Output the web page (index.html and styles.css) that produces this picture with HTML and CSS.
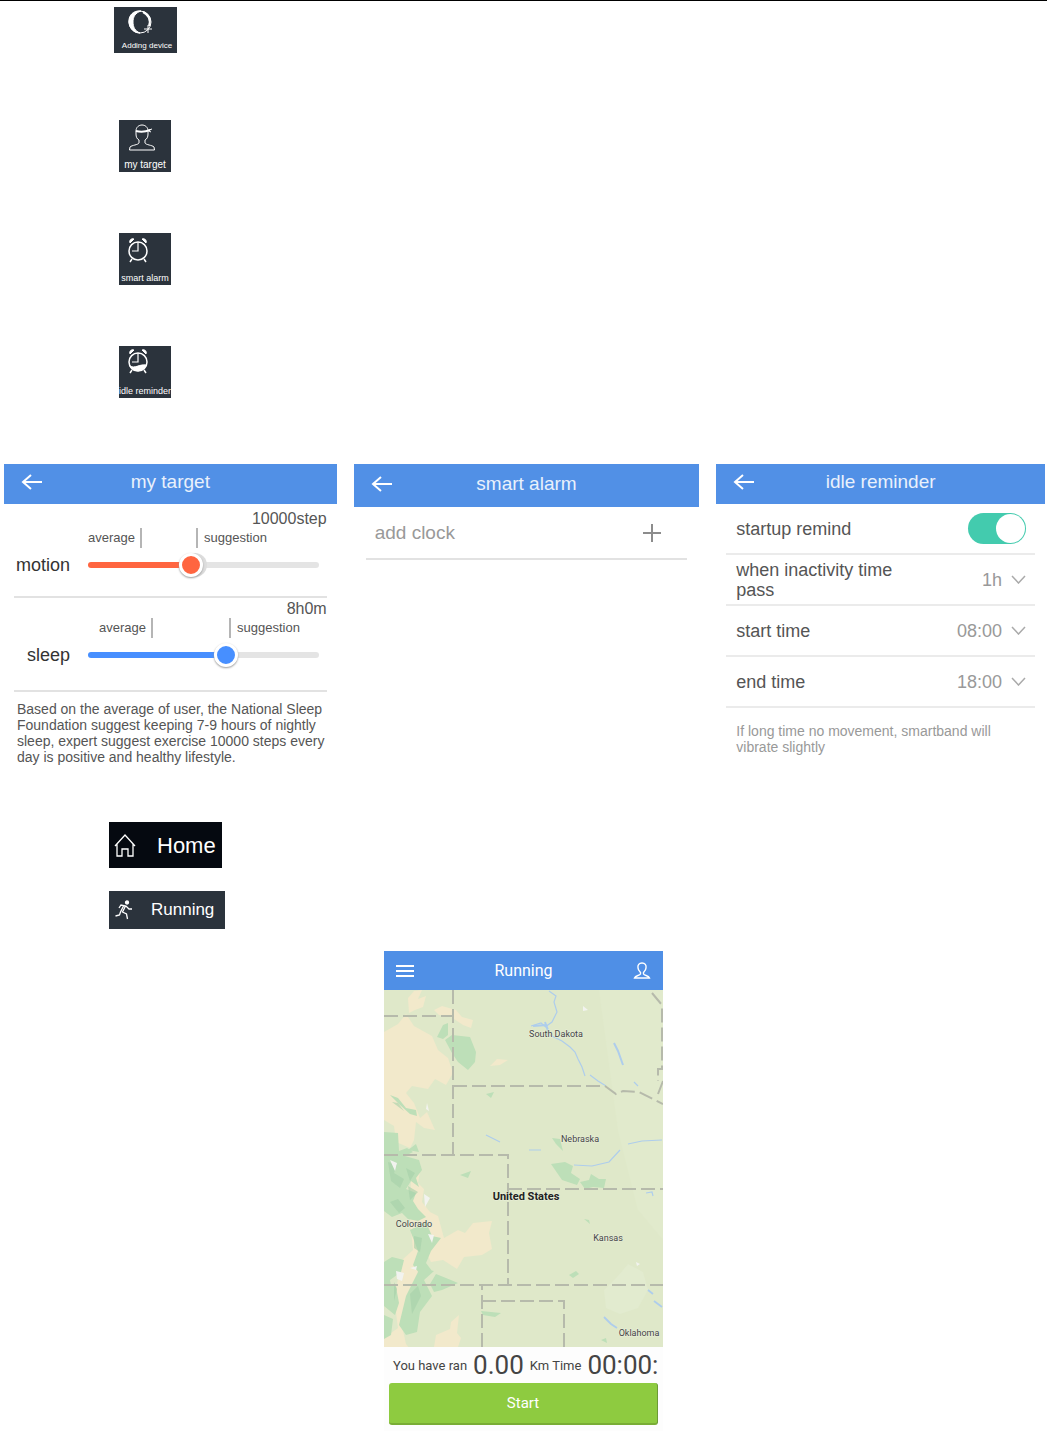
FILE: index.html
```
<!DOCTYPE html>
<html lang="en">
<head>
  <meta charset="UTF-8" />
  <meta name="viewport" content="width=device-width, initial-scale=1.0" />
  <title>Smartband App Guide</title>
  <link rel="stylesheet" href="styles.css">
</head>
<body>
  <main class="page">
    <div class="tiles">
      <button type="button" class="tile tile-wide">
        <svg width="28" height="27" viewBox="0 0 28 27" fill="none" stroke="#fff">
          <circle cx="14" cy="12" r="11" stroke-width="1" />
          <path d="M15 1C7 0 2 6 3 13c1 6 5 10 11 10-5-2-7-6-7-11S9 3 15 1z" fill="#fff" />
          <path d="M17 2c6 3 8 8 6 14" stroke-width="2" />
          <path d="M22 15v8M18 19h8" />
        </svg>
        <span>Adding device</span>
      </button>
      <button type="button" class="tile">
        <svg width="28" height="28" viewBox="0 0 28 28" fill="none" stroke="#fff">
          <path d="M8 8c0-8 12-8 12 0v3c0 3-1 5-3 6v3c1 2 7 2 9 4l.5 3h-25l.5-3c2-2 8-2 9-4v-3c-2-1-3-3-3-6z" />
          <path d="M8 8c4 1 9 1 14-1" stroke-width="2" />
          <path d="M21 7l3-1M21 8l2 1" />
        </svg>
        <span>my target</span>
      </button>
      <button type="button" class="tile tile-small">
        <svg width="24" height="28" viewBox="0 0 24 28" fill="none" stroke="#fff">
          <circle cx="12" cy="15" r="9" stroke-width="1.500" />
          <path d="M12 6v9H6" stroke-width="1.200" />
          <path d="M6 23l-2 3M18 23l2 3" stroke-width="1.500" />
          <path d="M4 7a3 3 0 0 1 4-4zM20 7a3 3 0 0 0-4-4z" fill="#fff" />
        </svg>
        <span>smart alarm</span>
      </button>
      <button type="button" class="tile tile-small">
        <svg width="24" height="26" viewBox="0 0 24 26" fill="none" stroke="#fff">
          <circle cx="12" cy="13" r="9" stroke-width="1.500" />
          <path d="M12 4v9H6" stroke-width="1.200" />
          <path d="M4 17c5 3 9-2 16-1-2 7-13 8-16 1z" fill="#fff" />
          <path d="M6 21l-2 3M18 21l2 3" stroke-width="1.500" />
          <path d="M4 5a3 3 0 0 1 4-4zM20 5a3 3 0 0 0-4-4z" fill="#fff" />
        </svg>
        <span>idle reminder</span>
      </button>
    </div>

    <div class="panels">
      <section class="panel">
        <header class="bar">
          <button type="button" class="back" aria-label="Back">
            <svg width="22" height="18" viewBox="0 0 22 18" fill="none" stroke="#fff" stroke-width="2"><path d="M21 9H2M10 2L2 9l8 7" /></svg>
          </button>
          <h2>my target</h2>
        </header>
        <div class="target">
          <output class="value" for="motion">10000step</output>
          <label for="motion">motion</label>
          <div class="marks">
            <span class="mark">average</span>
            <span class="mark mark-right">suggestion</span>
          </div>
          <input type="range" id="motion" class="slider slider-motion" min="0" max="100" value="44">
        </div>
        <div class="target">
          <output class="value" for="sleep">8h0m</output>
          <label for="sleep">sleep</label>
          <div class="marks marks-sleep">
            <span class="mark">average</span>
            <span class="mark mark-right">suggestion</span>
          </div>
          <input type="range" id="sleep" class="slider slider-sleep" min="0" max="100" value="61">
        </div>
        <p class="advice">Based on the average of user, the National Sleep Foundation suggest keeping 7-9 hours of nightly sleep, expert suggest exercise 10000 steps every day is positive and healthy lifestyle.</p>
      </section>

      <section class="panel">
        <header class="bar bar-tall">
          <button type="button" class="back" aria-label="Back">
            <svg width="22" height="18" viewBox="0 0 22 18" fill="none" stroke="#fff" stroke-width="2"><path d="M21 9H2M10 2L2 9l8 7" /></svg>
          </button>
          <h2>smart alarm</h2>
        </header>
        <button type="button" class="add-clock">
          add clock
          <svg width="20" height="20" viewBox="0 0 20 20" stroke="#8c8c8c" stroke-width="2"><path d="M10 1v18M1 10h18" /></svg>
        </button>
      </section>

      <section class="panel">
        <header class="bar">
          <button type="button" class="back" aria-label="Back">
            <svg width="22" height="18" viewBox="0 0 22 18" fill="none" stroke="#fff" stroke-width="2"><path d="M21 9H2M10 2L2 9l8 7" /></svg>
          </button>
          <h2>idle reminder</h2>
        </header>
        <div class="rows">
          <div class="row">
            <label for="remind">startup remind</label>
            <input type="checkbox" id="remind" class="switch" checked>
          </div>
          <div class="row">
            <label for="idle">when inactivity time pass</label>
            <select id="idle"><option>1h</option></select>
          </div>
          <div class="row">
            <label for="start">start time</label>
            <select id="start"><option>08:00</option></select>
          </div>
          <div class="row">
            <label for="end">end time</label>
            <select id="end"><option>18:00</option></select>
          </div>
        </div>
        <p class="note">If long time no movement, smartband will vibrate slightly</p>
      </section>
    </div>

    <nav class="menu">
      <a href="#home" class="menu-home">
        <svg width="22" height="24" viewBox="0 0 22 24" fill="none" stroke="#fff" stroke-width="1.300"><path d="M1 12L11 1l10 11M3 10v12h5v-7h6v7h5V10" /></svg>
        Home
      </a>
      <a href="#running" class="menu-running">
        <svg width="18" height="20" viewBox="0 0 18 20" fill="none" stroke="#fff" stroke-width="1.300">
          <circle cx="12" cy="2.500" r="1.500" fill="#fff" />
          <path d="M4 8l2-3 5 1 3 3h3M10.500 6l-3 6 4 2 1 5M8.500 6l-3 6-1 3-4 1" />
        </svg>
        Running
      </a>
    </nav>

    <section class="running" id="running">
      <header class="running-bar">
        <button type="button" aria-label="Menu">
          <svg width="18" height="14" viewBox="0 0 18 14" stroke="#fff" stroke-width="2"><path d="M0 2h18M0 7h18M0 12h18" /></svg>
        </button>
        <h2>Running</h2>
        <button type="button" aria-label="Profile">
          <svg width="18" height="18" viewBox="0 0 18 18" fill="none" stroke="#fff" stroke-width="1.400"><path d="M9 1C6 1 4.500 3 5 6c0 2 1 3 2.500 4.500V12c-1 2-5 1-6 4h15c-1-3-5-2-6-4v-1.500C12 9 13 8 13 6c.5-3-1-5-4-5z" /></svg>
        </button>
      </header>

      <svg class="map" viewBox="0 0 279 357">
        <rect width="279" height="357" fill="#dfe8c9" />
        <path fill="#e1eacc" d="M215 0h64v250l-25-30-20-80z" />

        <!-- dry land -->
        <g fill="#f2e9cb">
          <path d="M0 42l14-8 8-10 8 12 18 10 6 14 10 8 5 15-7 12-11-6-7 10-16-3-6 7 8 10 6 15 7-6 8 18-11-2-8-6-2 18-4 8-14-6-2-16-10-6z" />
          <path d="M24 8l6-7 8-1-4 9 8-3-3 11-8 3-6 3zM50 20l8-4 14 4 6 7 11 3-2 8-8-3-12-8-12-2zM106 76l7-7 11 1-8 5z" />
          <path d="M28 178l8 3-2 12 6 6-2 13 8 10 8 4 6 22 14-8 7 3 8-10 19-2-3 12 3 16-10 6-18 2-7 12-14-9-12 2-7-14-4 18-9 30-9 30 4 18 10 12H0v-18l14-10-4-30 8-38 11-10-4-40z" />
          <path d="M52 345l14-6 1-7 8-7-2 18 4 5-3 9H50z" />
        </g>

        <!-- forests -->
        <g fill="#bddfb8">
          <path d="M53 47l6-12 5-2v12l-5 4zM61 50l7-5 18 2 6 15-1 10-7 8-10-8-6-9z" />
          <path d="M6 105l8 3 8 10 10 2 1 6-7-2-10-9zM0 142l14 1 1 18 8-3 6 4-8 4 14 4 3 10-6 8 3 9-8-6-5 8 10 4-3 8 5 8 8 8-8 4-10-2-6-6-10 4-8-6zM24 160l8-6 3 8zM26 240l16-8 6 14 9 2-10 13-5 12 6 8-10 6-9-12 5-14zM0 272l8-5 12 3-3 12-11 8 2 12-8-2zM0 290l12 7 3 16-4 12-11-9zM22 306l9-18 5-10 14 3-10 9 8 16-12 16-3 20-11 3-7-10zM46 294l6-10 10 4 12 5-16 7-8 2zM0 325l9 4-2 16-7 4z" />
          <path d="M167 174l14-2 8 4-2 7 9 6-3 6-15-5zM196 192l9-2 2-6 8 5 7 0-2 9-11-1-8 2zM168 148l8 1 3 12-7-7zM102 104l8-2-3 6zM97 321l20 2-6 4-12-2zM76 185l11-4-3 7zM185 285l7-4 3 3-6 4zM200 229l5 1 1 4zM222 312l5-4 1 6zM217 350l5-2 1 5z" />
        </g>
        <g fill="#a5d0a8" opacity=".6">
          <path d="M4 172l9 3-3 8 10 6-4 9-9-7zM22 178l9 5-5 8zM24 196l10 6-8 8zM6 212l8-3 7 9-6 5zM30 246l8 2-2 14-6-4zM26 304l8-8 3 10-9 18zM8 112l6 1 6 8zM10 292l3 7-3 12z" />
        </g>
        <g fill="#f2f3ef">
          <path d="M6 170l7 3-2 8zM12 281l8 2-2 8-5-2zM26 278l7-2-1 4zM40 204l6 4-5 9zM44 244l6 1-2 8zM43 113l2 8-3-2zM252 272l4 2-3 2zM199 16l5 4-5 1z" />
        </g>
        <path fill="#e2ebcf" d="M220 300l14-14 10-12 15 8 5 18-10 18-18 6-14-6z" />

        <!-- rivers and lakes -->
        <g fill="none" stroke="#aecdec" stroke-width="1.200">
          <path d="M165 1l7 5-2 6 3 10-5 10-7 5M147 36l10-3 6 5 1 6 14 7 8 6 5 5 3 7 4 8 3 9" />
          <path d="M161 32l3 8M149 36l14-1" stroke-width="2" />
          <path d="M230 53l4 8 5 14" stroke-width="2" />
          <path d="M206 85l8 6 8 5M250 92l4 4M102 145l14 7M145 160h12M190 175l18 1 17-4 11-12M244 154l14-3 20-1M262 203l6-1 1 4" />
          <path d="M220 327l7 7 6 4M264 300l5 4M270 311l8 6" stroke-width="1.800" />
        </g>

        <!-- state borders -->
        <g class="borders">
          <path d="M69 0v165M0 26h69M69 96h152l11 8 7-3 16 1 24 12M0 165h124v130M124 199h155" />
          <path d="M0 295h279M98 357v-62M98 311h82v46" />
          <path d="M268 3l10 12v64h-4v12M279 91l-5 13" />
        </g>

        <g class="places">
          <text x="172" y="47">South Dakota</text>
          <text x="196" y="152">Nebraska</text>
          <text x="142" y="210" class="country">United States</text>
          <text x="30" y="237">Colorado</text>
          <text x="224" y="251">Kansas</text>
          <text x="255" y="346">Oklahoma</text>
        </g>
      </svg>

      <p class="stats">You have ran <b>0.00</b> Km Time <b>00:00:</b></p>
      <button type="button" class="start">Start</button>
    </section>
  </main>
</body>
</html>
```
FILE: styles.css
```
* {
  box-sizing: border-box;
}
body {
  margin: 0;
  background: #fff;
  font-family: "Liberation Sans", Arial, sans-serif;
  color: #555;
}
h2, p {
  margin: 0;
  font-weight: normal;
}
button {
  padding: 0;
  border: none;
  background: none;
  font-family: inherit;
  cursor: pointer;
}
svg {
  display: block;
}
.page {
  margin-right: 6px;
  border-top: 1px solid #000;
}

/* shortcut tiles */
.tiles {
  display: grid;
  grid-template-columns: 64px;
  grid-auto-rows: 113px;
  justify-items: center;
  align-items: start;
  margin-left: 113px;
  padding: 6px 0 5px;
}
.tile {
  display: flex;
  flex-direction: column;
  align-items: center;
  justify-content: space-between;
  width: 52px;
  height: 52px;
  padding: 3px 0 1px;
  background: #2b333c;
  color: #fff;
  font-size: 10px;
  line-height: 12px;
  white-space: nowrap;
  overflow: hidden;
}
.tile svg {
  margin-right: 6px;
}
.tile-wide {
  width: 63px;
  height: 46px;
  padding-left: 4px;
  font-size: 8px;
}
.tile-wide svg {
  margin-right: 14px;
}
.tile-small {
  font-size: 9px;
}
.tile-small svg {
  margin-right: 14px;
}

/* settings screens */
.panels {
  display: grid;
  grid-template-columns: 333fr 346fr 329fr;
  gap: 17px;
  align-items: start;
  padding: 0 2px 57px 4px;
}
.bar {
  display: grid;
  grid-template-columns: 22px 1fr 22px;
  align-items: center;
  height: 40px;
  padding: 0 17px 4px;
  background: #5190e6;
  color: #e9f1fc;
  text-align: center;
}
.bar h2 {
  font-size: 19px;
  line-height: 24px;
}
.bar-tall {
  height: 43px;
}
.target {
  display: grid;
  grid-template-columns: 56px 1fr;
  column-gap: 18px;
  align-content: start;
  height: 94px;
  margin: 0 10px;
  padding: 6px 8px 0 0;
  border-bottom: 2px solid #e2e2e2;
}
.target + .target {
  padding-top: 2px;
}
.value {
  grid-column: 1 / 3;
  margin-right: -8px;
  font-size: 16px;
  line-height: 18px;
  text-align: right;
}
.marks {
  grid-column: 2;
  grid-row: 2;
  display: flex;
  gap: 54px;
  margin-bottom: 5px;
  font-size: 13px;
  line-height: 20px;
}
.marks-sleep {
  gap: 76px;
  padding-left: 11px;
}
.mark {
  padding-right: 5px;
  border-right: 2px solid #b5b5b5;
}
.mark-right {
  padding: 0 0 0 6px;
  border-right: none;
  border-left: 2px solid #b5b5b5;
}
.target label {
  grid-row: 3;
  color: #333;
  font-size: 18px;
  line-height: 24px;
  text-align: right;
}
.slider {
  -webkit-appearance: none;
  appearance: none;
  grid-row: 3;
  width: 100%;
  height: 24px;
  margin: 0;
  background: none;
}
.slider::-webkit-slider-runnable-track {
  height: 6px;
  border-radius: 3px;
}
.slider-motion::-webkit-slider-runnable-track {
  background: linear-gradient(to right, #ff6540 44%, #e4e4e4 44%);
}
.slider-sleep::-webkit-slider-runnable-track {
  background: linear-gradient(to right, #478fff 60%, #e4e4e4 60%);
}
.slider::-webkit-slider-thumb {
  -webkit-appearance: none;
  width: 24px;
  height: 24px;
  margin-top: -9px;
  border: 3px solid #fff;
  border-radius: 50%;
  background: #478fff;
  box-shadow: 0 1px 2px #999;
}
.slider-motion::-webkit-slider-thumb {
  background: #ff6540;
  box-shadow: 0 1px 2px #999, 4px 0 0 #ddd;
}
.advice {
  margin: 9px 6px 0 13px;
  font-size: 14px;
  line-height: 16px;
}
.add-clock {
  display: flex;
  align-items: center;
  justify-content: space-between;
  width: calc(100% - 24px);
  height: 53px;
  margin: 0 12px;
  padding: 0 25px 0 9px;
  border-bottom: 2px solid #e2e2e2;
  color: #999;
  font-size: 19px;
}
.rows {
  margin: 0 10px;
}
.row {
  display: flex;
  align-items: center;
  justify-content: space-between;
  height: 51px;
  padding: 0 9px 0 10px;
  border-bottom: 2px solid #ebebeb;
  font-size: 18px;
  line-height: 20px;
}
.row label {
  max-width: 180px;
}
.row select {
  appearance: none;
  padding: 0 23px 0 0;
  border: none;
  background: url("data:image/svg+xml,%3Csvg xmlns='http://www.w3.org/2000/svg' width='15' height='9' fill='none' stroke='%23aaa' stroke-width='1.500'%3E%3Cpath d='M1 1l6.500 7L14 1'/%3E%3C/svg%3E") no-repeat right center;
  color: #999;
  font-family: inherit;
  font-size: 18px;
}
.switch {
  appearance: none;
  display: flex;
  justify-content: flex-end;
  width: 58px;
  height: 31px;
  margin: 0;
  padding: 1px;
  border-radius: 16px;
  background: #43cbae;
}
.switch::before {
  content: "";
  width: 29px;
  height: 29px;
  border-radius: 50%;
  background: #fff;
}
.switch:not(:checked) {
  justify-content: flex-start;
  background: #ccc;
}
.note {
  margin: 15px 19px 0 20px;
  color: #999;
  font-size: 14px;
  line-height: 16px;
}

/* side menu entries */
.menu {
  display: flex;
  flex-direction: column;
  align-items: flex-start;
  gap: 23px;
  margin: 0 0 22px 109px;
}
.menu a {
  display: flex;
  align-items: center;
  color: #fff;
  text-decoration: none;
}
.menu-home {
  gap: 21px;
  height: 46px;
  padding: 2px 6px 0 5px;
  background: #050910;
  font-size: 22px;
}
.menu-running {
  gap: 18px;
  height: 38px;
  padding: 0 11px 0 6px;
  background: #2b333c;
  font-size: 17px;
}

/* running screen */
.running {
  width: 279px;
  margin: 0 auto;
  padding-bottom: 6px;
  background: #fdfdfd;
  font-family: Roboto, sans-serif;
}
.running-bar {
  display: flex;
  align-items: center;
  justify-content: space-between;
  height: 39px;
  padding: 0 12px;
  background: #4f8fe6;
  color: #fff;
}
.running-bar h2 {
  font-size: 16px;
}
.map {
  width: 100%;
  height: auto;
}
.borders {
  fill: none;
  stroke: #b6baab;
  stroke-width: 2;
  stroke-dasharray: 14 5;
}
.places {
  fill: #444;
  stroke: #eaf0dc;
  stroke-width: 1;
  paint-order: stroke;
  font-size: 9px;
  text-anchor: middle;
}
.places .country {
  fill: #222;
  font-size: 11px;
  font-weight: bold;
}
.stats {
  display: flex;
  align-items: center;
  gap: 6px;
  height: 36px;
  padding-left: 9px;
  color: #444;
  font-size: 13px;
  white-space: nowrap;
}
.stats b {
  font-size: 26px;
  font-weight: normal;
}
.start {
  display: block;
  width: calc(100% - 10px);
  height: 42px;
  margin: 0 5px;
  border-right: 1px solid #6c9a36;
  border-bottom: 2px solid #79ad35;
  border-radius: 3px;
  background: #8ecb40;
  color: #fff;
  font-size: 15px;
}
```
